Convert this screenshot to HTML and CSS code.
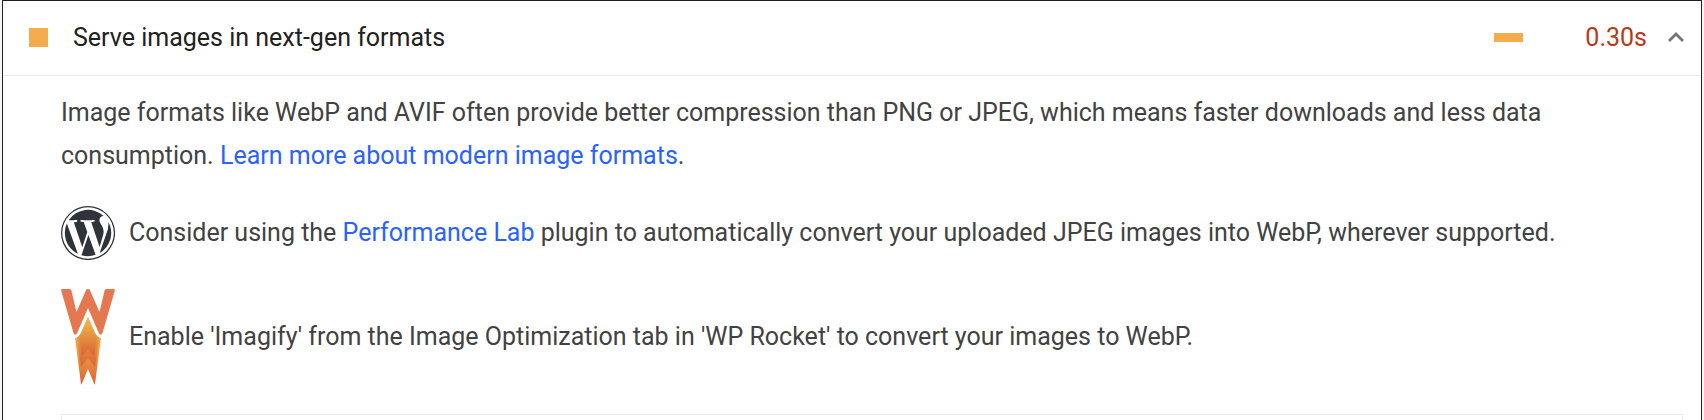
FILE: index.html
```html
<!DOCTYPE html>
<html lang="en">
<head>
    <meta charset="UTF-8">
    <meta name="viewport" content="width=device-width, initial-scale=1.0">
    <title>Serve images in next-gen formats</title>
    <link rel="stylesheet" href="styles.css">
</head>
<body>
    <main class="audit">
        <button type="button" class="audit-header" aria-expanded="true" aria-controls="auditBody">
            <span class="audit-marker"></span>
            <span class="audit-title">Serve images in next-gen formats</span>
            <span class="audit-bar"></span>
            <span class="audit-value">0.30s</span>
            <svg class="audit-chevron" viewBox="0 0 16 10" aria-hidden="true">
                <path d="M1 9 L8 2 L15 9" fill="none" stroke="#757575" stroke-width="2.8"/>
            </svg>
        </button>

        <div class="audit-body" id="auditBody">
            <p class="audit-description">Image formats like WebP and AVIF often provide better compression than PNG or JPEG, which means faster downloads and less data consumption. <a href="#formats">Learn more about modern image formats</a>.</p>

            <div class="stack-pack">
                <svg class="stack-icon" viewBox="0 0 122.5 122.7" role="img" aria-label="WordPress">
                    <g fill="#2f3439">
                        <path d="M8.7 61.3c0 20.8 12.1 38.7 29.6 47.3l-25-68.7c-3 6.5-4.6 13.7-4.6 21.4zM96.7 58.6c0-6.5-2.3-11-4.3-14.5-2.7-4.3-5.2-8-5.2-12.3 0-4.8 3.7-9.3 8.9-9.3h.7a52.4 52.4 0 0 0-79.4 9.9h3.3c5.5 0 14-.6 14-.6 2.9-.2 3.2 4 .4 4.3 0 0-2.9.4-6 .5l19.1 57L59.7 59l-8.2-22.5c-2.8-.1-5.5-.5-5.5-.5-2.8-.1-2.5-4.5.3-4.3 0 0 8.7.7 13.9.7 5.5 0 14-.7 14-.7 2.8-.2 3.2 4 .3 4.3 0 0-2.8.4-6 .5l19 56.5 5.2-17.5c2.3-7.3 4-12.5 4-17z"/>
                        <path d="M62.2 65.9l-15.8 45.8a52.6 52.6 0 0 0 32.3-.9l-.4-.7zM107.4 36a49.6 49.6 0 0 1-3.6 24.2l-16.1 46.5A52.5 52.5 0 0 0 107.4 36z"/>
                        <path d="M61.3 0a61.3 61.3 0 1 0 .1 122.7A61.3 61.3 0 0 0 61.3 0zm0 119.7a58.5 58.5 0 1 1 .1-117 58.5 58.5 0 0 1-.1 117z"/>
                    </g>
                </svg>
                <p>Consider using the <a href="#performance-lab">Performance Lab</a> plugin to automatically convert your uploaded JPEG images into WebP, wherever supported.</p>
            </div>

            <div class="stack-pack">
                <svg class="stack-icon" viewBox="0 0 54 96" role="img" aria-label="WP Rocket">
                    <defs>
                        <linearGradient id="flameOuter" x1="0" y1="28" x2="0" y2="96" gradientUnits="userSpaceOnUse">
                            <stop offset="0" stop-color="#efbf4d"/>
                            <stop offset=".5" stop-color="#eda044"/>
                            <stop offset="1" stop-color="#d96237"/>
                        </linearGradient>
                        <linearGradient id="flameInner" x1="0" y1="28" x2="0" y2="67" gradientUnits="userSpaceOnUse">
                            <stop offset="0" stop-color="#efbf4d"/>
                            <stop offset="1" stop-color="#dc6238"/>
                        </linearGradient>
                        <linearGradient id="flameMiddle" x1="0" y1="28" x2="0" y2="78" gradientUnits="userSpaceOnUse">
                            <stop offset="0" stop-color="#efbf4d"/>
                            <stop offset="1" stop-color="#dc6438"/>
                        </linearGradient>
                    </defs>
                    <path fill="#e57850" d="M1.5 0H8.5Q10 0 10.4 1.5L15.5 23 25 1.2Q25.5 0 27 0T29 1.2L38.5 23 43.6 1.5Q44 0 45.5 0H52.5Q54.3 0 53.8 1.8L41.5 44Q41.1 45.5 39.8 45.5 38.5 45.5 37.9 44.3L27 19 16.1 44.3Q15.5 45.5 14.2 45.5 12.9 45.5 12.5 44L.2 1.8Q-.3 0 1.5 0Z"/>
                    <path fill="url(#flameOuter)" d="M27 28L33 42Q35.5 48.5 40 49L34 95Q33.7 96 33.3 95L27 80 20.7 95Q20.3 96 20 95L14 49Q18.500 48.5 21 42Z"/>
                    <path fill="url(#flameMiddle)" d="M27 28L33 42Q35 47 38 48.5L34 78 27 69 20 78 16 48.5Q19 47 21 42Z"/>
                    <path fill="url(#flameInner)" d="M27 28L33 42Q34.5 46 36 47L33 67 27 60 21 67 18 47Q19.5 46 21 42Z"/>
                </svg>
                <p>Enable 'Imagify' from the Image Optimization tab in 'WP Rocket' to convert your images to WebP.</p>
            </div>

            <div class="audit-details"></div>
        </div>
    </main>
</body>
</html>
```
FILE: styles.css
```css
* {
    box-sizing: border-box;
}
body {
    margin: 0;
    padding: 0 2px;
    background-color: #f5f5f5;
    font-family: Roboto, sans-serif;
    font-size: 25px;
    color: #424242;
}
p {
    margin: 0;
}
a {
    color: #2962ff;
    text-decoration: none;
}
.audit {
    background: white;
    border: 1px solid #212121;
    border-bottom: none;
}
.audit-header {
    display: flex;
    align-items: center;
    width: 100%;
    height: 75px;
    padding: 0 17px 2px 26px;
    border: none;
    border-bottom: 1px solid #ebebeb;
    background: white;
    font: inherit;
    text-align: left;
    cursor: pointer;
}
.audit-marker {
    width: 19px;
    height: 19px;
    background: #f4ac4e;
}
.audit-title {
    flex: 1;
    margin-left: 25px;
    color: #212121;
}
.audit-bar {
    width: 29px;
    height: 9px;
    background: #f4ac4e;
}
.audit-value {
    width: 124px;
    text-align: right;
    color: #b93815;
}
.audit-chevron {
    width: 16px;
    height: 10px;
    margin-left: 21px;
}
.audit-body {
    padding: 15px 18px 0 58px;
}
.audit-description {
    line-height: 43px;
}
.stack-pack {
    display: flex;
    align-items: center;
    gap: 14px;
    margin-top: 29px;
}
.stack-pack p {
    padding-bottom: 2px;
}
.stack-icon {
    flex: none;
    width: 54px;
}
.audit-details {
    height: 6px;
    margin-top: 29px;
    border: 1px solid #ebebeb;
    border-bottom: none;
}
```
